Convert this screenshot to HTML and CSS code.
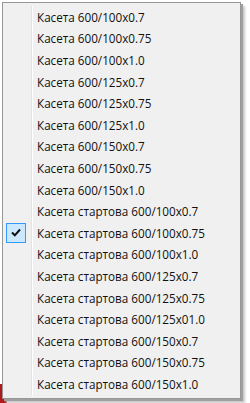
FILE: index.html
```html
<!DOCTYPE html>
<html lang="uk">
<head>
  <meta charset="UTF-8">
  <title>Menu</title>
  <link rel="stylesheet" href="styles.css">
</head>
<body>
  <div class="backdrop">
    <span class="behind">i</span>
    <ul class="menu">
      <li class="item"><span class="gutter"></span><span class="label">Касета 600/100x0.7</span></li>
      <li class="item"><span class="gutter"></span><span class="label">Касета 600/100x0.75</span></li>
      <li class="item"><span class="gutter"></span><span class="label">Касета 600/100x1.0</span></li>
      <li class="item"><span class="gutter"></span><span class="label">Касета 600/125x0.7</span></li>
      <li class="item"><span class="gutter"></span><span class="label">Касета 600/125x0.75</span></li>
      <li class="item"><span class="gutter"></span><span class="label">Касета 600/125x1.0</span></li>
      <li class="item"><span class="gutter"></span><span class="label">Касета 600/150x0.7</span></li>
      <li class="item"><span class="gutter"></span><span class="label">Касета 600/150x0.75</span></li>
      <li class="item"><span class="gutter"></span><span class="label">Касета 600/150x1.0</span></li>
      <li class="item"><span class="gutter"></span><span class="label">Касета стартова 600/100x0.7</span></li>
      <li class="item checked">
        <span class="gutter">
          <span class="check">
            <svg width="10" height="9" viewBox="0 0 10 9"><path d="M1 4.5 L3.8 7.3 L9 1.5" fill="none" stroke="#111" stroke-width="2"/></svg>
          </span>
        </span>
        <span class="label">Касета стартова 600/100x0.75</span>
      </li>
      <li class="item"><span class="gutter"></span><span class="label">Касета стартова 600/100x1.0</span></li>
      <li class="item"><span class="gutter"></span><span class="label">Касета стартова 600/125x0.7</span></li>
      <li class="item"><span class="gutter"></span><span class="label">Касета стартова 600/125x0.75</span></li>
      <li class="item"><span class="gutter"></span><span class="label">Касета стартова 600/125x01.0</span></li>
      <li class="item"><span class="gutter"></span><span class="label">Касета стартова 600/150x0.7</span></li>
      <li class="item"><span class="gutter"></span><span class="label">Касета стартова 600/150x0.75</span></li>
      <li class="item"><span class="gutter"></span><span class="label">Касета стартова 600/150x1.0</span></li>
    </ul>
  </div>
</body>
</html>
```

FILE: styles.css
```css
body {
  margin: 0;
  background: #ffffff;
  font-family: 'Open Sans', 'Noto Sans', sans-serif;
  font-size: 11.7px;
  color: #111;
}
.backdrop {
  position: relative;
  width: 250px;
  height: 403px;
  overflow: hidden;
}
.behind {
  position: absolute;
  left: 0;
  top: 384px;
  width: 7px;
  height: 19px;
  background: #b11a1a;
  color: transparent;
}
.menu {
  position: relative;
  list-style: none;
  margin: 2px 0 0 2px;
  padding: 3px 0 3px 0;
  width: 239px;
  box-sizing: border-box;
  background: #f0f0f0;
  border: 1px solid #979797;
  box-shadow: 2px 2px 0 #a0a0a0, 4px 4px 2px #c8c8c8;
}
.item {
  display: flex;
  align-items: center;
  height: 21.6px;
}
.gutter {
  width: 29px;
  height: 100%;
  margin-right: 5px;
  border-right: 1px solid #e2e3e3;
  box-shadow: 1px 0 0 #ffffff;
  display: flex;
  align-items: center;
  padding-left: 3px;
  box-sizing: border-box;
}
.check {
  width: 20px;
  height: 20px;
  box-sizing: border-box;
  background: #cce8ff;
  border: 1px solid #3399ff;
  display: flex;
  align-items: center;
  justify-content: center;
}
.label {
  white-space: nowrap;
}
```
